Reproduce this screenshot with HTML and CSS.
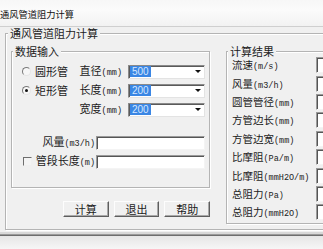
FILE: index.html
```html
<!DOCTYPE html>
<html lang="zh">
<head>
<meta charset="utf-8">
<title>通风管道阻力计算</title>
<link rel="stylesheet" href="styles.css">
</head>
<body>
<div class="titlebar">通风管道阻力计算</div>
<div class="window">
  <fieldset class="group outer">
    <legend>通风管道阻力计算</legend>
    <div class="cols">
      <div class="left">
        <fieldset class="group data">
          <legend>数据输入</legend>
          <div class="data-body">
            <div class="row">
              <span class="radio"></span><span class="lbl">圆形管</span>
              <span class="dim">直径<span class="u">(mm)</span></span>
              <div class="combo"><span class="sel">500</span><span class="arrow"></span></div>
            </div>
            <div class="row">
              <span class="radio on"></span><span class="lbl">矩形管</span>
              <span class="dim">长度<span class="u">(mm)</span></span>
              <div class="combo"><span class="sel">200</span><span class="arrow"></span></div>
            </div>
            <div class="row">
              <span class="dim">宽度<span class="u">(mm)</span></span>
              <div class="combo"><span class="sel">200</span><span class="arrow"></span></div>
            </div>
            <div class="row r4">
              <span class="flbl">风量<span class="u">(m3/h)</span></span>
              <div class="edit"></div>
            </div>
            <div class="row r5">
              <span class="check"></span>
              <span class="flbl">管段长度<span class="u">(m)</span></span>
              <div class="edit"></div>
            </div>
          </div>
        </fieldset>
        <div class="buttons">
          <div class="btn">计算</div>
          <div class="btn">退出</div>
          <div class="btn">帮助</div>
        </div>
      </div>
      <fieldset class="group result">
        <legend>计算结果</legend>
        <div class="rgrid">
          <span class="rl">流速<span class="u">(m/s)</span></span><div class="rbox"></div>
          <span class="rl">风量<span class="u">(m3/h)</span></span><div class="rbox"></div>
          <span class="rl">圆管管径<span class="u">(mm)</span></span><div class="rbox"></div>
          <span class="rl">方管边长<span class="u">(mm)</span></span><div class="rbox"></div>
          <span class="rl">方管边宽<span class="u">(mm)</span></span><div class="rbox"></div>
          <span class="rl">比摩阻<span class="u">(Pa/m)</span></span><div class="rbox"></div>
          <span class="rl">比摩阻<span class="u">(mmH2O/m)</span></span><div class="rbox"></div>
          <span class="rl">总阻力<span class="u">(Pa)</span></span><div class="rbox"></div>
          <span class="rl">总阻力<span class="u">(mmH2O)</span></span><div class="rbox"></div>
        </div>
      </fieldset>
    </div>
  </fieldset>
</div>
<div class="desk"></div>
</body>
</html>
```

FILE: styles.css
```css
* { box-sizing: border-box; }
html, body { margin: 0; padding: 0; }
body {
  width: 323px;
  height: 249px;
  overflow: hidden;
  background: #f0f0f0;
  font-family: "Noto Sans CJK SC", "Noto Sans CJK JP", sans-serif;
  font-size: 11px;
  line-height: 13px;
  color: #1c1c1c;
}
.titlebar {
  height: 27px;
  padding-top: 2px;
  border-bottom: 1px solid #cfcfcf;
  background: linear-gradient(#f7f7f7, #fbfbfb 40%, #f2f2f2);
  font-size: 9.25px;
  line-height: 24px;
  white-space: nowrap;
  color: #111;
}
.window {
  height: 208px;
  background: #f0f0f0;
  border-bottom: 1px solid #9a9a9a;
  box-shadow: inset 0 -2px 0 #d8d8d8;
  overflow: hidden;
}
.desk {
  height: 14px;
  border-top: 1px solid #6e6e6e;
  background: linear-gradient(#e6e6e6, #f6f6f6);
}
.group {
  margin: 0;
  padding: 0;
  min-width: 0;
  border: 1px solid #b4b4b4;
  box-shadow: inset 1px 1px 0 #fff, 1px 1px 0 #fff;
}
.group > legend {
  padding: 0 2px;
  margin-left: 1px;
  line-height: 13px;
  font-size: 11px;
  background: #f0f0f0;
}
.group.outer {
  margin-left: 5px;
  width: 345px;
  padding: 5px 0 5px 0;
}
.group.outer > legend { margin-left: 2px; }
.cols {
  display: flex;
  align-items: flex-start;
}
.left {
  margin-left: 5px;
  width: 199px;
  flex: none;
}
.group.data { width: 199px; }
.data-body {
  padding: 4px 4px 16px 10px;
}
.row {
  display: flex;
  align-items: center;
  height: 19px;
}
.radio {
  width: 9px;
  height: 9px;
  border-radius: 50%;
  border: 1px solid;
  border-color: #7a7a7a #e6e6e6 #e6e6e6 #7a7a7a;
  background: #f7f7f7;
  position: relative;
  flex: none;
}
.radio.on::after {
  content: "";
  position: absolute;
  left: 2px;
  top: 2px;
  width: 3px;
  height: 3px;
  border-radius: 50%;
  background: #111;
}
.lbl { margin-left: 4px; }
.dim { margin-left: auto; white-space: nowrap; }
.u {
  font-family: "Liberation Mono", monospace;
  font-size: 8.5px;
  color: #222;
}
.combo {
  margin-left: 6px;
  width: 77px;
  height: 14px;
  flex: none;
  display: flex;
  align-items: center;
  background: #fff;
  border: 1px solid;
  border-color: #8a8a8a #e3e3e3 #e3e3e3 #8a8a8a;
  box-shadow: inset 1px 1px 0 #5a5a5a;
}
.sel {
  margin-left: 1px;
  height: 11px;
  padding: 0 2px;
  background: #3a86e4;
  color: #d6e6ff;
  font-family: "Liberation Sans", sans-serif;
  font-size: 10px;
  line-height: 11px;
}
.arrow {
  margin-left: auto;
  margin-right: 3px;
  width: 0;
  height: 0;
  border-left: 3px solid transparent;
  border-right: 3px solid transparent;
  border-top: 3px solid #111;
}
.r4 { margin-top: 14px; justify-content: flex-end; }
.r5 { justify-content: flex-end; }
.flbl { white-space: nowrap; }
.check {
  margin-left: 1px;
  margin-right: auto;
  width: 9px;
  height: 9px;
  border: 1px solid;
  border-color: #6e6e6e #f0f0f0 #f0f0f0 #6e6e6e;
  background: #f4f4f4;
}
.edit {
  margin-left: 1px;
  width: 109px;
  height: 14px;
  flex: none;
  background: #fff;
  border: 1px solid;
  border-color: #9a9a9a #f4f4f4 #f4f4f4 #9a9a9a;
  box-shadow: inset 1px 1px 0 #555;
}
.buttons {
  display: flex;
  gap: 5px;
  margin-top: 13px;
  padding-left: 52px;
}
.btn {
  width: 47px;
  height: 16px;
  display: flex;
  align-items: center;
  justify-content: center;
  background: #f0f0f0;
  border: 1px solid;
  border-color: #fdfdfd #5e5e5e #5e5e5e #fdfdfd;
  box-shadow: inset -1px -1px 0 #a8a8a8;
  font-size: 11px;
}
.group.result {
  margin-left: 16px;
  width: 150px;
  flex: none;
}
.rgrid {
  display: grid;
  grid-template-columns: 84px 40px;
  grid-auto-rows: 18.4px;
  align-items: center;
  margin-top: -1px;
  padding-left: 5px;
}
.rl { white-space: nowrap; font-size: 10.5px; }
.rbox {
  height: 16px;
  margin-top: -2px;
  background: #fff;
  border: 1px solid;
  border-color: #9a9a9a #f4f4f4 #f4f4f4 #9a9a9a;
  box-shadow: inset 1px 1px 0 #555;
}
```
